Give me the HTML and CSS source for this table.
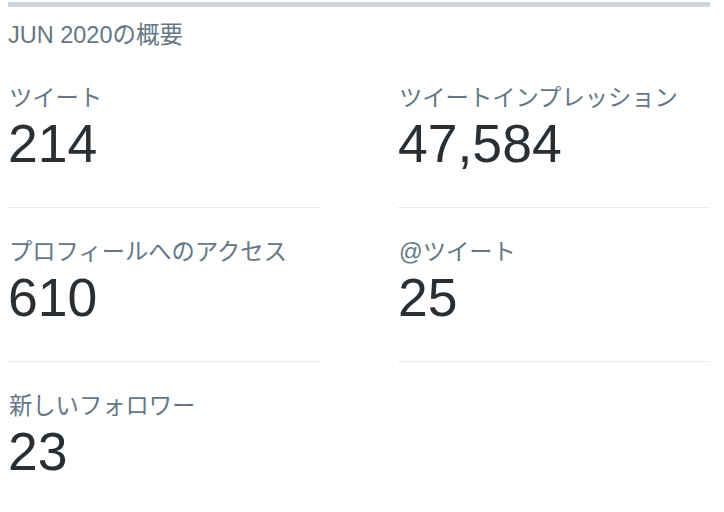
FILE: index.html
```html
<!DOCTYPE html>
<html lang="ja">
<head>
<meta charset="utf-8">
<title>JUN 2020の概要</title>
<link rel="stylesheet" href="styles.css">
</head>
<body>
<div class="summary">
  <div class="topbar"></div>
  <h2 class="title">JUN 2020の概要</h2>
  <div class="stats">
    <div class="stat">
      <div class="label">ツイート</div>
      <div class="value">214</div>
    </div>
    <div class="stat">
      <div class="label">ツイートインプレッション</div>
      <div class="value">47,584</div>
    </div>
    <div class="stat">
      <div class="label">プロフィールへのアクセス</div>
      <div class="value">610</div>
    </div>
    <div class="stat">
      <div class="label">@ツイート</div>
      <div class="value">25</div>
    </div>
    <div class="stat">
      <div class="label">新しいフォロワー</div>
      <div class="value">23</div>
    </div>
  </div>
</div>
</body>
</html>
```
FILE: styles.css
```css
html, body {
  margin: 0;
  padding: 0;
  background: #ffffff;
}
body {
  font-family: "Liberation Sans", "Noto Sans CJK JP", sans-serif;
}
.summary {
  width: 702px;
  padding: 2px 0 0 8px;
}
.topbar {
  height: 5px;
  background: #ccd6dd;
}
.title {
  margin: 14px 0 5px;
  font-size: 23.5px;
  line-height: 28px;
  font-weight: normal;
  color: #657786;
}
.stats {
  display: grid;
  grid-template-columns: 312px 312px;
  column-gap: 78px;
}
.stat {
  padding: 30px 0 35px;
  border-bottom: 1px solid #e6ecf0;
}
.stat:last-child {
  border-bottom: none;
}
.label {
  font-size: 23.3px;
  line-height: 28px;
  color: #657786;
  padding-left: 1px;
}
.value {
  margin-top: 3px;
  font-size: 53.5px;
  line-height: 57px;
  color: #292f33;
}
```
